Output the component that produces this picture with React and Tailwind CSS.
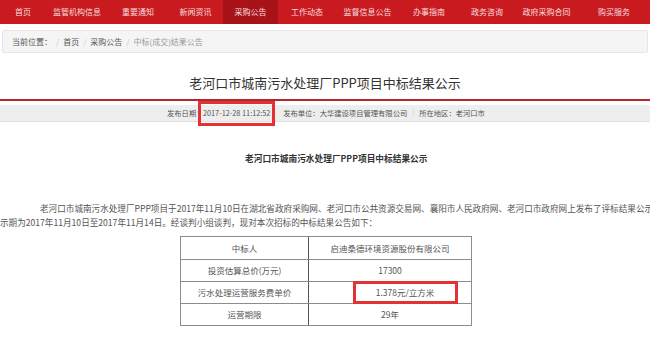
import React from 'react';

const navItems = [
  ['首页', 'w-[46px]'],
  ['监管机构信息', 'w-[62px]'],
  ['重要通知', 'w-[60px]'],
  ['新闻资讯', 'w-[55px]'],
  ['采购公告', 'w-[55px]'],
  ['工作动态', 'w-[58px]'],
  ['监督信息公告', 'w-[63px]'],
  ['办事指南', 'w-[60px]'],
  ['政务咨询', 'w-[56px]'],
  ['政府采购合同', 'w-[63px]'],
  ['购买服务', 'w-[72px]'],
];

const rows = [
  ['中标人', '启迪桑德环境资源股份有限公司'],
  ['投资估算总价(万元)', '17300'],
  ['污水处理运营服务费单价', '1.378元/立方米'],
  ['运营期限', '29年'],
];

const App = () => {
  return (
    <div
      className="w-[650px] h-[339px] overflow-hidden bg-white text-[#444]"
      style={{ fontFamily: '"Noto Sans CJK SC", "Noto Sans", sans-serif' }}
    >
      {/* Nav */}
      <div className="h-[24px] bg-[#c91a20] flex items-stretch text-[8px] text-[#f7dede] whitespace-nowrap">
        {navItems.map(([item, w]) => (
          <div
            key={item}
            className={`${w} flex items-center justify-center ${item === '采购公告' ? 'bg-[#a8131a]' : ''}`}
          >
            {item}
          </div>
        ))}
      </div>

      {/* Breadcrumb */}
      <div className="mx-[2px] mt-[6px] h-[23px] bg-[#f5f5f5] border border-[#e6e6e6] rounded-[2px] flex items-center pl-[9px] text-[8px] text-[#555] gap-[4px] whitespace-nowrap">
        <span>当前位置：</span>
        <span className="text-[#ccc]">/</span>
        <span>首页</span>
        <span className="text-[#ccc]">/</span>
        <span>采购公告</span>
        <span className="text-[#ccc]">/</span>
        <span className="text-[#999]">中标(成交)结果公告</span>
      </div>

      {/* Title */}
      <div className="h-[46px] flex items-end justify-center pb-[7px] text-[13px] text-[#333]">
        老河口市城南污水处理厂PPP项目中标结果公示
      </div>
      <div className="h-[2px] bg-[#b3282d]" />

      {/* Meta */}
      <div className="mt-[4px] h-[17px] bg-[#eeeeee] border-b border-[#e0e0e0] flex items-center pl-[167px] text-[7.3px] text-[#555] whitespace-nowrap">
        <span>发布日期</span>
        <span className="ml-[2px] h-[25px] w-[77px] border-[3px] border-[#e23233] flex items-center justify-center text-[#555]">
          2017-12-28 11:12:52
        </span>
        <span className="ml-[8px]">发布单位：大华建设项目管理有限公司</span>
        <span className="ml-[5px] text-[#ccc]">|</span>
        <span className="ml-[5px]">所在地区：老河口市</span>
      </div>

      {/* Subtitle */}
      <div className="mt-[30px] pl-[245px] text-[8.7px] font-bold text-[#333]">
        老河口市城南污水处理厂PPP项目中标结果公示
      </div>

      {/* Paragraph */}
      <div className="mt-[36px] text-[8.6px] leading-[14px] text-[#555] whitespace-nowrap">
        <div className="pl-[40px]">
          老河口市城南污水处理厂PPP项目于2017年11月10日在湖北省政府采购网、老河口市公共资源交易网、襄阳市人民政府网、老河口市政府网上发布了评标结果公示，公
        </div>
        <div>示期为2017年11月10日至2017年11月14日。经谈判小组谈判，现对本次招标的中标结果公告如下：</div>
      </div>

      {/* Table */}
      <div className="mt-[7px] ml-[180px] w-[292px] border border-[#8c8c8c] text-[8.5px] text-[#555] whitespace-nowrap">
        {rows.map(([k, v], i) => (
          <div key={k} className={`flex h-[22px] ${i > 0 ? 'border-t border-[#8c8c8c]' : ''}`}>
            <div className="w-[128px] border-r border-[#555] flex items-center justify-center">{k}</div>
            <div className="flex-1 flex items-center justify-center">
              {i === 2 ? (
                <span className="h-[23px] w-[105px] ml-[30px] border-[3px] border-[#e23233] flex items-center justify-center">
                  {v}
                </span>
              ) : (
                v
              )}
            </div>
          </div>
        ))}
      </div>
    </div>
  );
};

export default App;
